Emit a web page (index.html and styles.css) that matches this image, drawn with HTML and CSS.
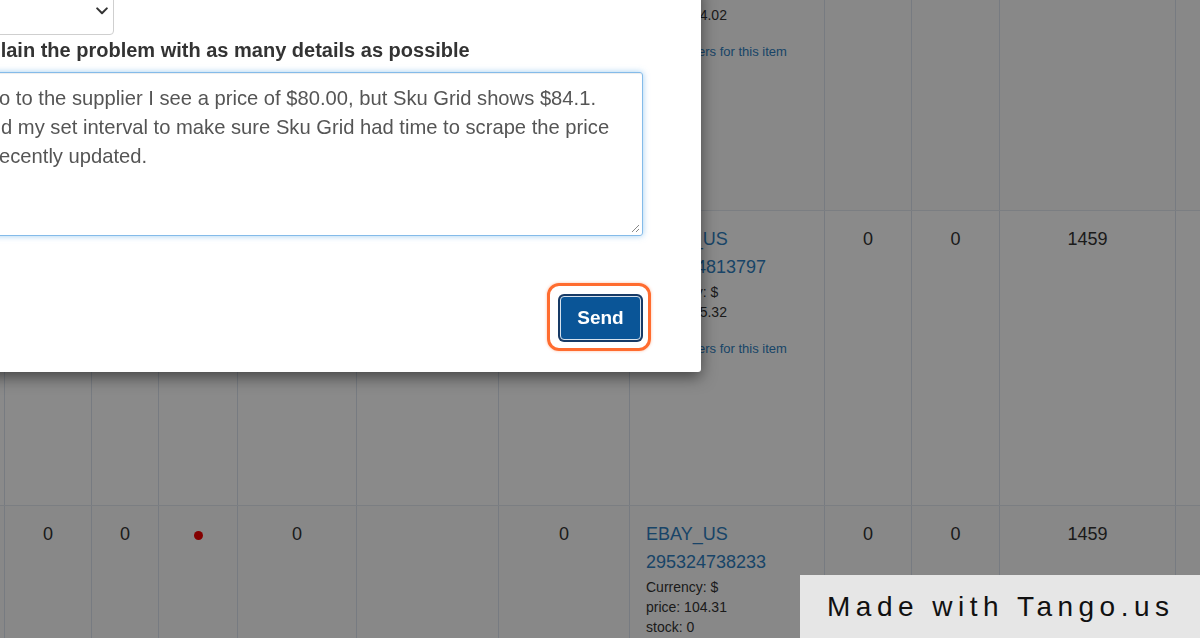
FILE: index.html
```html
<!DOCTYPE html>
<html>
<head>
<meta charset="utf-8">
<link rel="stylesheet" href="styles.css">
</head>
<body>
<div class="table">
  <div class="row row-first row-odd">
    <div class="cell"></div>
    <div class="cell"></div>
    <div class="cell"></div>
    <div class="cell"></div>
    <div class="cell"></div>
    <div class="cell"></div>
    <div class="cell"></div>
    <div class="cell sup">
      <div class="meta">price: 104.02<br>stock: 0</div>
      <a class="more">All suppliers for this item</a>
    </div>
    <div class="cell"></div>
    <div class="cell"></div>
    <div class="cell"></div>
    <div class="cell"></div>
  </div>
  <div class="row">
    <div class="cell"></div>
    <div class="cell">0</div>
    <div class="cell">0</div>
    <div class="cell"><span class="dot"></span></div>
    <div class="cell">0</div>
    <div class="cell"></div>
    <div class="cell">0</div>
    <div class="cell sup">
      <a class="link">EBAY_US</a><br><a class="link">295324813797</a>
      <div class="meta">Currency: $<br>price: 105.32<br>stock: 0</div>
      <a class="more">All suppliers for this item</a>
    </div>
    <div class="cell">0</div>
    <div class="cell">0</div>
    <div class="cell">1459</div>
    <div class="cell"></div>
  </div>
  <div class="row row-odd">
    <div class="cell"></div>
    <div class="cell">0</div>
    <div class="cell">0</div>
    <div class="cell"><span class="dot"></span></div>
    <div class="cell">0</div>
    <div class="cell"></div>
    <div class="cell">0</div>
    <div class="cell sup">
      <a class="link">EBAY_US</a><br><a class="link">295324738233</a>
      <div class="meta">Currency: $<br>price: 104.31<br>stock: 0</div>
    </div>
    <div class="cell">0</div>
    <div class="cell">0</div>
    <div class="cell">1459</div>
    <div class="cell"></div>
  </div>
</div>

<div class="backdrop"></div>

<div class="modal">
  <div class="select">
    <svg class="chev" width="12" height="8" viewBox="0 0 12 8"><path d="M1.2 1.4 L6 6.2 L10.8 1.4" fill="none" stroke="#333" stroke-width="2" stroke-linecap="round" stroke-linejoin="round"/></svg>
  </div>
  <div class="label">Explain the problem with as many details as possible</div>
  <div class="textarea">
    <div>o to the supplier I see a price of $80.00, but Sku Grid shows $84.1.</div>
    <div class="l2">d my set interval to make sure Sku Grid had time to scrape the price</div>
    <div>ecently updated.</div>
    <svg class="grip" width="10" height="10" viewBox="0 0 10 10"><path d="M9 2 L2 9 M9 6 L6 9" stroke="#888" stroke-width="1" fill="none"/></svg>
  </div>
  <div class="footer">
    <div class="btn-wrap"><button class="btn">Send</button></div>
  </div>
</div>

<div class="tango">Made with Tango.us</div>
</body>
</html>
```
FILE: styles.css
```css
html, body {
  margin: 0;
  padding: 0;
}
body {
  width: 1200px;
  height: 638px;
  overflow: hidden;
  position: relative;
  background: #fff;
  font-family: "Liberation Sans", Arial, Helvetica, sans-serif;
}

.table {
  margin-left: -20px;
}
.row {
  display: grid;
  grid-template-columns: 25px 87px 67px 79px 119px 142px 131px 195px 87px 88px 176px 100px;
  height: 295px;
  box-sizing: border-box;
  border-top: 1px solid #e4e9f0;
  background: #fff;
}
.row-first {
  height: 210px;
  border-top: 0;
}
.row-first .cell.sup {
  padding-top: 4px;
}
.row-odd {
  background: #fbfbfb;
}
.cell {
  border-right: 1px solid #dde4ee;
  padding-top: 13.5px;
  text-align: center;
  font-size: 18px;
  line-height: 28px;
  color: #333;
}
.cell.sup {
  text-align: left;
  padding-left: 16px;
}
.link {
  color: #2f7fc0;
  font-size: 18px;
}
.meta {
  margin-top: 1px;
  font-size: 14px;
  line-height: 20px;
  color: #333;
}
.more {
  display: block;
  margin-top: -1px;
  font-size: 13px;
  line-height: 16px;
  color: #2f7fc0;
}
.dot {
  display: inline-block;
  width: 9px;
  height: 9px;
  border-radius: 50%;
  background: #f20000;
  margin-top: 11px;
  vertical-align: top;
}

.backdrop {
  position: fixed;
  left: 0;
  top: 0;
  right: 0;
  bottom: 0;
  background: rgba(0, 0, 0, 0.46);
}

.modal {
  position: absolute;
  left: -66px;
  top: -13px;
  width: 767px;
  box-sizing: border-box;
  padding: 0 58px 32px 30px;
  background: #fff;
  border-radius: 0 0 3px 0;
  box-shadow: 0 5px 15px rgba(0, 0, 0, 0.5);
}
.select {
  width: 150px;
  height: 48px;
  box-sizing: border-box;
  border: 1px solid #cfcfcf;
  border-radius: 4px;
  display: flex;
  justify-content: flex-end;
  align-items: center;
  padding-right: 5px;
}
.label {
  margin-top: 5px;
  font-size: 20px;
  line-height: 20px;
  font-weight: bold;
  color: #333;
  white-space: nowrap;
}
.textarea {
  position: relative;
  margin-top: 12px;
  height: 164px;
  box-sizing: border-box;
  border: 1px solid #84bbe9;
  border-radius: 3px;
  box-shadow: inset 0 1px 1px rgba(0, 0, 0, 0.075), 0 0 6px rgba(102, 175, 233, 0.6);
  padding: 11px 12px 0 34px;
  font-size: 20.2px;
  line-height: 29px;
  color: #555;
  white-space: nowrap;
}
.textarea .l2 {
  margin-left: 2px;
}
.grip {
  position: absolute;
  right: 2px;
  bottom: 2px;
}
.footer {
  display: flex;
  justify-content: flex-end;
  padding-top: 60px;
}
.btn-wrap {
  position: relative;
  margin-right: 2px;
}
.btn-wrap::after {
  content: "";
  position: absolute;
  left: -13px;
  right: -10px;
  top: -13px;
  bottom: -11px;
  border: 3px solid #ff6c2f;
  border-radius: 12px;
  box-shadow: 0 0 3px rgba(255, 108, 47, 0.45);
}
.btn {
  display: block;
  width: 81px;
  height: 44px;
  margin: 0;
  padding: 0;
  background: #0a5597;
  color: #fff;
  font-family: "Liberation Sans", Arial, Helvetica, sans-serif;
  font-size: 19px;
  font-weight: bold;
  border: 1px solid #d6e2ee;
  border-radius: 4px;
  box-shadow: 0 0 0 2px #173a66;
}

.tango {
  position: fixed;
  right: 0;
  bottom: 0;
  width: 400px;
  height: 63px;
  box-sizing: border-box;
  padding-left: 27px;
  display: flex;
  align-items: center;
  background: #e6e6e6;
  color: #111;
  font-size: 28px;
  letter-spacing: 5.5px;
  white-space: nowrap;
}
```
